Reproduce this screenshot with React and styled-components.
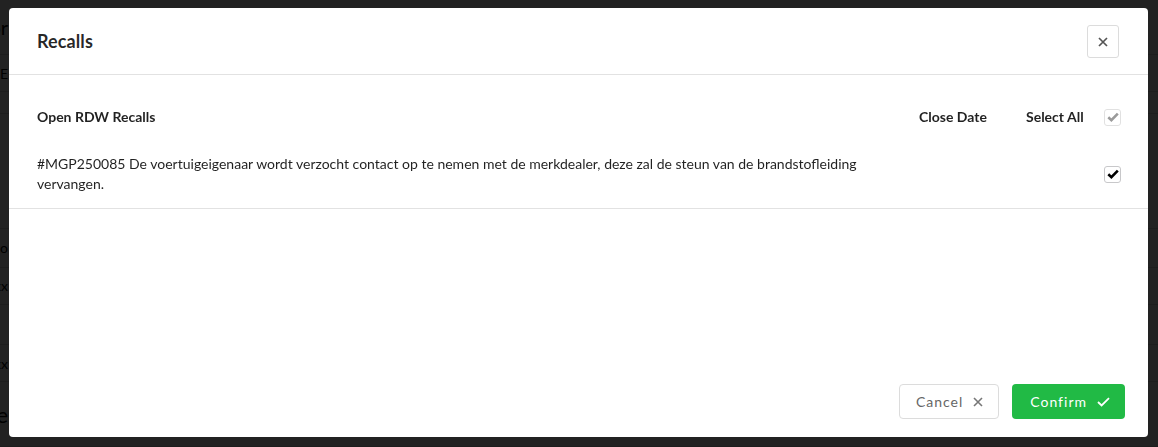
import React from "react";
import styled, { createGlobalStyle } from "styled-components";

const Global = createGlobalStyle`
  html, body { margin: 0; padding: 0; }
  body {
    width: 1158px;
    height: 447px;
    overflow: hidden;
    background: #fff;
    font-family: Lato, "Open Sans", Arial, sans-serif;
  }
`;

/* ---------- background page (dimmed) ---------- */
const Page = styled.div`
  width: 1158px;
  height: 447px;
  display: flex;
  flex-direction: column;
  background: #fff;
`;

const PageRow = styled.div`
  height: ${(p) => p.$h}px;
  display: flex;
  align-items: center;
  border-bottom: 1px solid #d8d8d8;
  font-size: ${(p) => p.$size || 14}px;
  color: #000;
`;

const PageCell = styled.div`
  width: 8px;
  display: flex;
  justify-content: flex-end;
  white-space: nowrap;
`;

/* ---------- modal ---------- */
const Dimmer = styled.div`
  position: fixed;
  inset: 0;
  background: rgba(0, 0, 0, 0.865);
  display: flex;
  padding: 8px 10px 10px 9px;
  box-sizing: border-box;
`;

const Modal = styled.div`
  flex: 1;
  background: #fff;
  border-radius: 4px;
  display: flex;
  flex-direction: column;
  color: rgba(0, 0, 0, 0.87);
  font-size: 14px;
  line-height: 20px;
`;

const Header = styled.div`
  height: 66px;
  display: flex;
  align-items: center;
  justify-content: space-between;
  padding: 0 29px 0 28px;
  border-bottom: 1px solid #e2e2e2;
`;

const Title = styled.h2`
  margin: 0;
  font-size: 18px;
  font-weight: 700;
  color: rgba(0, 0, 0, 0.85);
  letter-spacing: 0.1px;
`;

const CloseButton = styled.button`
  width: 32px;
  height: 33px;
  border: 1px solid #dcdcdc;
  border-radius: 3px;
  background: #fff;
  display: flex;
  align-items: center;
  justify-content: center;
  padding: 0;
  margin-top: 1px;
`;

const Row = styled.div`
  display: grid;
  grid-template-columns: 1fr 107px 78px 17px;
  align-items: center;
  padding: ${(p) => (p.$head ? "32px 27px 11px 28px" : "16px 27px 14px 28px")};
  border-bottom: ${(p) => (p.$head ? "none" : "1px solid #e2e2e2")};
  font-weight: ${(p) => (p.$head ? 700 : 400)};
`;

const Cell = styled.div`
  padding-right: ${(p) => (p.$desc ? "20px" : "0")};
  white-space: ${(p) => (p.$desc ? "normal" : "nowrap")};
`;

const Box = styled.span`
  width: 17px;
  height: 17px;
  box-sizing: border-box;
  border: 1px solid ${(p) => (p.$muted ? "#e1e1e1" : "#c8c8ca")};
  border-radius: 3px;
  display: flex;
  align-items: center;
  justify-content: center;
  background: #fff;
`;

const Spacer = styled.div`
  flex: 1;
`;

const Footer = styled.div`
  display: flex;
  justify-content: flex-end;
  gap: 13px;
  padding: 0 23px 18px 0;
`;

const Button = styled.button`
  height: 35px;
  box-sizing: border-box;
  display: flex;
  align-items: center;
  gap: 10px;
  font-family: Lato, "Open Sans", Arial, sans-serif;
  font-size: 14px;
  letter-spacing: 1px;
  border-radius: 4px;
  cursor: pointer;
  padding: ${(p) => (p.$primary ? "0 15px 0 18px" : "0 15px 0 16px")};
  border: ${(p) => (p.$primary ? "none" : "1px solid #dcdcdc")};
  background: ${(p) => (p.$primary ? "#21ba45" : "#fff")};
  color: ${(p) => (p.$primary ? "#fff" : "#666")};
  font-weight: 400;
`;

const CheckMark = ({ color }) => (
  <svg width="12" height="10" viewBox="0 0 12 10">
    <path
      d="M1.3 5.2 L4.4 8.1 L10.8 1.6"
      fill="none"
      stroke={color}
      strokeWidth="2.6"
      strokeLinecap="butt"
      strokeLinejoin="miter"
    />
  </svg>
);

const XIcon = ({ size = 10, color = "#555", w = 1.5 }) => (
  <svg width={size} height={size} viewBox="0 0 10 10">
    <path d="M1 1 L9 9 M9 1 L1 9" stroke={color} strokeWidth={w} fill="none" />
  </svg>
);

const ThinCheck = () => (
  <svg width="13" height="10" viewBox="0 0 13 10">
    <path d="M1 5 L4.6 8.4 L12 1.2" stroke="#fff" strokeWidth="1.8" fill="none" />
  </svg>
);

export default function App() {
  return (
    <>
      <Global />
      <Page>
        <PageRow $h={55} $size={20}><PageCell>Informatior</PageCell></PageRow>
        <PageRow $h={37}><PageCell>Kenteken-E</PageCell></PageRow>
        <PageRow $h={21} />
        <PageRow $h={117} />
        <PageRow $h={38}><PageCell>Merk en modo</PageCell></PageRow>
        <PageRow $h={37}><PageCell>xxx</PageCell></PageRow>
        <PageRow $h={40} />
        <PageRow $h={37}><PageCell>xx</PageCell></PageRow>
        <PageRow $h={65} $size={22}><PageCell>Onderhoudshistorie</PageCell></PageRow>
      </Page>
      <Dimmer>
        <Modal>
          <Header>
            <Title>Recalls</Title>
            <CloseButton aria-label="Close">
              <XIcon size={10} color="#555" w={1.7} />
            </CloseButton>
          </Header>
          <Row $head>
            <Cell $desc>Open RDW Recalls</Cell>
            <Cell>Close Date</Cell>
            <Cell>Select All</Cell>
            <Box $muted>
              <CheckMark color="#9a9a9a" />
            </Box>
          </Row>
          <Row>
            <Cell $desc>
              #MGP250085 De voertuigeigenaar wordt verzocht contact op te nemen met de
              merkdealer, deze zal de steun van de brandstofleiding vervangen.
            </Cell>
            <Cell />
            <Cell />
            <Box>
              <CheckMark color="#000" />
            </Box>
          </Row>
          <Spacer />
          <Footer>
            <Button>
              Cancel
              <XIcon size={10} color="#777" w={1.6} />
            </Button>
            <Button $primary>
              Confirm
              <ThinCheck />
            </Button>
          </Footer>
        </Modal>
      </Dimmer>
    </>
  );
}
